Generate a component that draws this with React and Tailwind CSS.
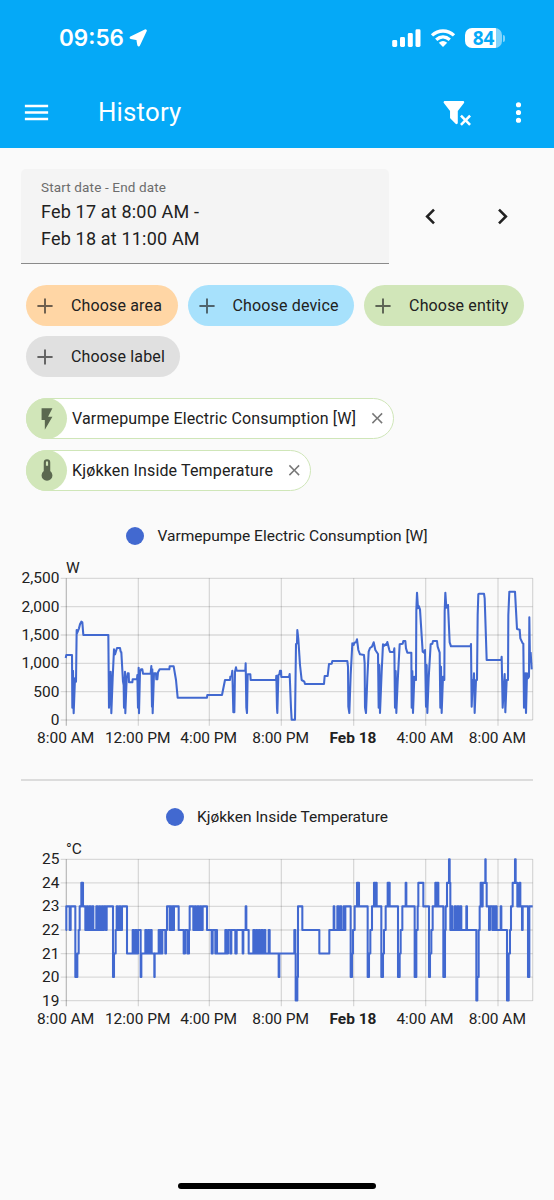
const ICONS = {
  menu: "M3,6H21V8H3V6M3,11H21V13H3V11M3,16H21V18H3V16Z",
  filterRemove:
    "M14.73,20.83L17.58,18L14.73,15.17L16.15,13.76L19,16.57L21.8,13.76L23.22,15.17L20.41,18L23.22,20.83L21.8,22.24L19,19.4L16.15,22.24L14.73,20.83M13,19.88C13.04,20.18 12.94,20.5 12.71,20.71C12.32,21.1 11.69,21.1 11.29,20.71L7.29,16.7C7.06,16.47 6.96,16.16 7,15.87V10.75L2.21,4.62C1.87,4.19 1.95,3.56 2.38,3.22C2.57,3.08 2.78,3 3,3H17C17.22,3 17.43,3.08 17.62,3.22C18.05,3.56 18.13,4.19 17.79,4.62L13,10.75V19.88Z",
  dots: "M12,16A2,2 0 0,1 14,18A2,2 0 0,1 12,20A2,2 0 0,1 10,18A2,2 0 0,1 12,16M12,10A2,2 0 0,1 14,12A2,2 0 0,1 12,14A2,2 0 0,1 10,12A2,2 0 0,1 12,10M12,4A2,2 0 0,1 14,6A2,2 0 0,1 12,8A2,2 0 0,1 10,6A2,2 0 0,1 12,4Z",
  left: "M15.41,16.58L10.83,12L15.41,7.41L14,6L8,12L14,18L15.41,16.58Z",
  right: "M8.59,16.58L13.17,12L8.59,7.41L10,6L16,12L10,18L8.59,16.58Z",
  plus: "M19,12.9H12.9V19H11.1V12.9H5V11.1H11.1V5H12.9V11.1H19V12.9Z",
  close:
    "M19,6.41L17.59,5L12,10.59L6.41,5L5,6.41L10.59,12L5,17.59L6.41,19L12,13.41L17.59,19L19,17.59L13.41,12L19,6.41Z",
  flash: "M7,2V13H10V22L17,10H13L17,2H7Z",
  thermometer:
    "M15,13V5A3,3 0 0,0 9,5V13A5,5 0 1,0 15,13M12,4A1,1 0 0,1 13,5V8H11V5A1,1 0 0,1 12,4Z",
};

function Icon({ name, className }) {
  return (
    <svg viewBox="0 0 24 24" fill="currentColor" className={className}>
      <path d={ICONS[name]} />
    </svg>
  );
}

function StatusBar() {
  return (
    <div className="flex h-[75px] items-center justify-between pt-px pr-[49px] pl-[59px]">
      <div className="flex items-center gap-[5px]">
        <span className="font-['Inter'] text-[22.5px] leading-none font-semibold">09:56</span>
        <svg viewBox="0 0 18 18" className="size-[18px]" fill="currentColor">
          <path
            d="M2 8.7 16.4 1.7 9.7 16 8.6 9.8Z"
            stroke="currentColor"
            strokeWidth="2.8"
            strokeLinejoin="round"
          />
        </svg>
      </div>
      <div className="flex items-center">
        <svg viewBox="0 0 29 18" className="h-[18px] w-[29px]" fill="currentColor">
          <rect x="0.2" y="11" width="5" height="7" rx="1.4" />
          <rect x="8" y="8" width="5" height="10" rx="1.4" />
          <rect x="15.8" y="4" width="5" height="14" rx="1.4" />
          <rect x="23.5" y="0.3" width="5" height="17.7" rx="1.4" />
        </svg>
        <svg viewBox="0 0 26 18" className="ml-[9px] h-[18px] w-[26px]" fill="none">
          <path
            d="M2 6.4C8.4 .5 17.6 .5 24 6.4M6.2 10.7C10.3 7.1 15.7 7.1 19.8 10.7"
            stroke="currentColor"
            strokeWidth="3.3"
          />
          <path d="M13 17.9 8.8 13.7Q13 10.4 17.2 13.7Z" fill="currentColor" />
        </svg>
        <div className="ml-[9px] flex h-5 w-[37px] items-center justify-center rounded-[7px] bg-linear-to-r from-white from-84% to-[#82d4fb] to-84%">
          <span className="font-['Open_Sans'] text-[19px] leading-5 font-bold text-[#05a9f7]">
            84
          </span>
        </div>
        <div className="ml-[1px] h-[7px] w-[2px] rounded-r-full bg-[#82d4fb]" />
      </div>
    </div>
  );
}

function AddChip({ label, className }) {
  return (
    <button
      className={`flex h-[41px] items-center rounded-full pr-[15.5px] pl-[6px] text-[#212121] ${className}`}
    >
      <Icon name="plus" className="size-[26px] opacity-65" />
      <span className="ml-[13px] pt-px text-[16px] tracking-[0.15px]">{label}</span>
    </button>
  );
}

function EntityChip({ icon, label }) {
  return (
    <div className="flex h-[41px] w-fit items-center rounded-full border border-[#cfe6b8] bg-white pr-[6.5px]">
      <div className="-ml-px flex size-[41px] items-center justify-center rounded-full bg-[#d1e6b9]">
        <Icon name={icon} className="size-[26px] text-[#5b6850]" />
      </div>
      <span className="ml-[5px] pt-px text-[16px] tracking-[0.15px] text-[#212121]">{label}</span>
      <Icon name="close" className="ml-[12px] size-[18.5px] text-[#777]" />
    </div>
  );
}

// chart coordinates are three units per CSS pixel
const POWER =
  "167,309 169,300 186,300 187,458 189,347 191,475 195,370 198,380 200,225 201,235 207,220 210,208 214,200 217,202 220,240 295,240 297,458 302,350 304,475 308,370 312,283 315,298 321,279 330,279 332,290 334,292 339,380 341,390 342,458 345,350 346,475 350,370 353,355 356,355 357,382 367,382 368,373 381,373 382,360 384,458 386,338 387,475 390,350 393,343 397,343 399,356 422,356 424,333 426,455 427,343 428,475 432,355 438,355 439,373 442,373 444,352 449,343 478,343 479,334 491,334 498,375 503,428 591,428 592,420 636,420 645,375 660,375 661,365 665,363 667,347 670,472 673,472 675,350 678,337 680,347 706,347 707,325 709,458 711,474 713,358 721,358 722,375 798,375 799,362 801,458 802,474 805,360 808,358 810,347 813,347 814,366 837,366 839,357 843,460 845,494 855,494 858,267 861,265 862,225 865,252 870,330 875,375 883,380 885,387 942,387 944,363 953,363 957,327 965,326 967,318 1012,318 1014,335 1015,455 1018,474 1022,360 1027,265 1031,270 1033,263 1038,262 1041,253 1045,285 1050,298 1062,300 1064,325 1065,458 1068,474 1072,370 1076,290 1080,279 1086,275 1091,262 1096,285 1104,297 1106,458 1108,330 1110,474 1115,350 1119,268 1123,272 1127,268 1129,270 1132,261 1138,285 1140,291 1151,291 1153,280 1155,458 1157,348 1159,474 1163,380 1169,268 1178,266 1180,258 1186,258 1188,280 1192,293 1204,293 1205,458 1207,348 1209,474 1213,365 1218,375 1219,165 1221,113 1224,160 1226,153 1230,163 1238,290 1242,293 1245,285 1248,455 1250,330 1252,474 1256,370 1262,268 1267,266 1269,258 1281,258 1283,275 1289,293 1291,458 1293,335 1295,474 1299,365 1303,375 1304,170 1306,113 1309,158 1314,150 1319,262 1323,274 1382,274 1383,267 1385,455 1388,375 1391,380 1392,355 1394,474 1398,375 1401,375 1403,180 1405,118 1407,116 1422,116 1424,130 1430,315 1474,315 1475,305 1478,458 1484,357 1486,472 1490,375 1494,375 1495,180 1498,110 1515,110 1521,222 1529,224 1531,250 1538,265 1540,266 1542,458 1546,355 1548,474 1551,355 1554,370 1557,365 1558,187 1560,320 1562,293 1565,343";

// fast flapping between two neighbouring degrees
function burst(from, to, a, b) {
  const out = [];
  for (let x = from, i = 0; x <= to; x += 4, i++) {
    out.push([x, i % 2 ? b : a]);
  }
  return out;
}

const TEMPERATURE = [
  [167, 22], [169, 23], [179, 22], [182, 23], [196, 20], [202, 21], [206, 22], [209, 23],
  [214, 24], [219, 23],
  ...burst(226, 252, 22, 23), [254, 22], ...burst(259, 281, 23, 22),
  [282, 23], [287, 22], [290, 23], [309, 20], [312, 21], [317, 22],
  ...burst(320, 336, 23, 22),
  [338, 23], [351, 21], ...burst(368, 384, 22, 21),
  [386, 22], [392, 20], [394, 21], ...burst(406, 422, 22, 21),
  [425, 21], [433, 20], [434, 21], [446, 22], [448, 21], [451, 22], [454, 21], [457, 22],
  [466, 21], [468, 22], [471, 23], [479, 22], [481, 23], [484, 22], [487, 23], [490, 22],
  [492, 23], [506, 22], [521, 21], [525, 22], [532, 21], [537, 22], [539, 23],
  ...burst(550, 577, 22, 23),
  [578, 23], [591, 22], [605, 21], [608, 22], [616, 21], [618, 22], [621, 21],
  ...burst(646, 656, 22, 21),
  [658, 22], [661, 21], [664, 22], [676, 21], [680, 22], [698, 21], [700, 22], [707, 23],
  [709, 22], [716, 21],
  ...burst(730, 768, 22, 21),
  [768, 21], [776, 22], [779, 21], [806, 20], [808, 21], [853, 22], [856, 21], [857, 19],
  [862, 20], [864, 23], [877, 22], [928, 21], [958, 22], [971, 23], [973, 22],
  ...burst(982, 994, 23, 22),
  [995, 22], [1001, 23], [1003, 22], [1006, 23], [1022, 20], [1026, 21], [1029, 22], [1034, 23],
  [1041, 24], [1043, 23], [1045, 24], [1047, 23],
  [1073, 20], [1077, 21], [1081, 22], [1086, 23], [1092, 24], [1095, 23], [1098, 24], [1100, 23],
  [1114, 20], [1119, 21], [1122, 22], [1127, 23], [1133, 24], [1136, 23], [1138, 24], [1139, 23],
  [1164, 20], [1169, 21], [1172, 22], [1177, 23], [1187, 24], [1189, 23],
  [1214, 20], [1219, 22], [1223, 23], [1225, 24], [1240, 23],
  [1257, 20], [1260, 21], [1264, 22], [1268, 23], [1276, 24], [1279, 23], [1282, 24], [1285, 23],
  [1300, 20], [1305, 22], [1307, 23], [1311, 24], [1317, 25], [1319, 24], [1321, 22],
  [1324, 23], [1327, 22], ...burst(1334, 1356, 23, 22),
  [1357, 22], [1369, 23], [1371, 22], [1399, 19], [1402, 20], [1406, 22], [1409, 23],
  [1412, 24], [1415, 23], [1418, 24], [1426, 25], [1427, 24], [1430, 23], [1437, 22], [1440, 23],
  [1447, 22], [1450, 23], [1453, 22], [1456, 23], [1460, 22], [1472, 23], [1474, 22],
  [1491, 19], [1496, 21], [1500, 22], [1503, 23], [1508, 24], [1515, 25], [1517, 24],
  [1522, 23], [1528, 24], [1531, 23], [1536, 22], [1538, 23], [1554, 20], [1558, 23], [1568, 23],
];

const TEMPERATURE_LINE = TEMPERATURE.map(([x, t], i) => {
  const y = 268 + (25 - t) * 70.6;
  return i === 0 ? `M${x},${y}` : `H${x}V${y}`;
}).join("");

const TIMES = [
  [169, "8:00 AM"],
  [385, "12:00 PM"],
  [598, "4:00 PM"],
  [814, "8:00 PM"],
  [1031, "Feb 18"],
  [1247, "4:00 AM"],
  [1464, "8:00 AM"],
];

function HistoryChart({ name, unit, ticks, top, bottom, d, className }) {
  const step = (bottom - top) / (ticks.length - 1);
  return (
    <section className={className}>
      <div className="flex h-5 items-center justify-center gap-[13px]">
        <span className="size-[18px] rounded-full bg-[#4269d0]" />
        <span className="pt-px text-[15.5px] leading-5 text-[#212121]">{name}</span>
      </div>
      <svg
        viewBox={`0 ${top - 70} 1602 600`}
        className="mt-[9px] ml-[10px] block w-[534px]"
        fontFamily="Roboto, sans-serif"
        fontSize="46.4"
        fill="#212121"
      >
        <text x="168" y={top - 16}>{unit}</text>
        {ticks.map((tick, i) => (
          <g key={tick}>
            <path d={`M152 ${top + i * step}H1568`} stroke="#000" strokeOpacity="0.13" strokeWidth="3.8" />
            <text x="148" y={top + i * step + 15} textAnchor="end">
              {tick}
            </text>
          </g>
        ))}
        {TIMES.map(([x, time]) => (
          <g key={x}>
            <path
              d={`M${x} ${top}V${bottom + 17}`}
              stroke="#000"
              strokeOpacity={x === 169 ? "0.25" : "0.14"}
              strokeWidth="3.8"
            />
            <text
              x={x - 2}
              y={bottom + 69}
              textAnchor="middle"
              fontWeight={time === "Feb 18" ? "700" : "400"}
            >
              {time}
            </text>
          </g>
        ))}
        <path d={`M1568 ${top}V${bottom}`} stroke="#000" strokeOpacity="0.14" strokeWidth="3.8" />
        <path d={d} fill="none" stroke="#4269d0" strokeWidth="6.2" strokeLinejoin="round" />
      </svg>
    </section>
  );
}

function App() {
  return (
    <div className="flex h-[1200px] w-[554px] flex-col overflow-hidden bg-[#fafafa] font-['Roboto',sans-serif]">
      <header className="h-[148px] shrink-0 bg-[#05a9f7] text-white">
        <StatusBar />
        <div className="flex h-[74px] items-center pr-[20.5px] pl-[20.5px]">
          <Icon name="menu" className="size-[31px]" />
          <h1 className="ml-[46.5px] pt-[2px] text-[25.8px] leading-none tracking-[0.2px]">History</h1>
          <Icon name="filterRemove" className="ml-auto size-[31px]" />
          <Icon name="dots" className="ml-[31px] size-[31px]" />
        </div>
      </header>

      <div className="mt-[21px] flex items-center pl-[21px]">
        <div className="h-[95px] w-[368px] rounded-t-[5px] border-b border-[#8a8a8a] bg-[#f4f4f4] pt-[9px] pl-5">
          <div className="text-[13.5px] leading-[19px] tracking-[0.15px] text-[#6c6c6c]">
            Start date - End date
          </div>
          <div className="pt-px text-[18px] leading-[27px] tracking-[0.18px] text-[#212121]">
            Feb 17 at 8:00 AM -<br />
            Feb 18 at 11:00 AM
          </div>
        </div>
        <Icon name="left" className="ml-[26px] size-[31px] text-[#212121]" />
        <Icon name="right" className="ml-[41px] size-[31px] text-[#212121]" />
      </div>

      <div className="mt-[21px] flex flex-wrap gap-x-[10px] gap-y-[10px] pl-[26px]">
        <AddChip label="Choose area" className="bg-[#ffd6a5]" />
        <AddChip label="Choose device" className="bg-[#a7e1fc]" />
        <AddChip label="Choose entity" className="bg-[#d1e6b9]" />
        <AddChip label="Choose label" className="bg-[#e0e0e0]" />
      </div>

      <div className="mt-[21px] flex flex-col gap-[10.5px] pl-[26px]">
        <EntityChip icon="flash" label="Varmepumpe Electric Consumption [W]" />
        <EntityChip icon="thermometer" label="Kjøkken Inside Temperature" />
      </div>

      <HistoryChart
        className="mt-[35px]"
        name="Varmepumpe Electric Consumption [W]"
        unit="W"
        ticks={["2,500", "2,000", "1,500", "1,000", "500", "0"]}
        top={70}
        bottom={495}
        d={`M${POWER}`}
      />
      <hr className="mt-[24px] mr-[21px] ml-[21px] border-t-2 border-[#dcdcdc]" />
      <HistoryChart
        className="mt-[26px]"
        name="Kjøkken Inside Temperature"
        unit="°C"
        ticks={["25", "24", "23", "22", "21", "20", "19"]}
        top={268}
        bottom={692}
        d={TEMPERATURE_LINE}
      />

      <div className="mt-auto mb-[11px] h-[6px] w-[198px] self-center rounded-full bg-black" />
    </div>
  );
}

export default App;
